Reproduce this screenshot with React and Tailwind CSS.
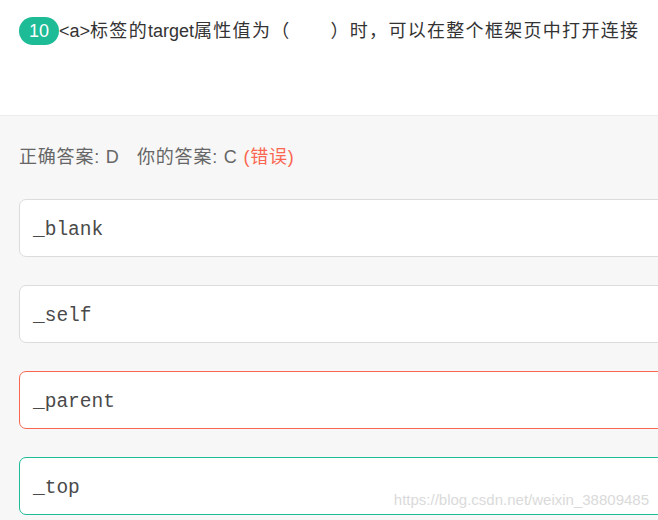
import React from 'react';

const OPTIONS = [
  { key: 'A', text: '_blank', state: 'normal' },
  { key: 'B', text: '_self', state: 'normal' },
  { key: 'C', text: '_parent', state: 'wrong' },
  { key: 'D', text: '_top', state: 'right' },
];

const BORDER = {
  normal: 'border-[#dcdcdc]',
  wrong: 'border-[#fa6650]',
  right: 'border-[#1dbb96]',
};

// CJK runs get a bit of tracking to match the wider glyphs in the original
const Cjk = ({ children }) => <span className="tracking-[1.3px]">{children}</span>;

export default function App() {
  return (
    <div
      className="relative w-[658px] h-[520px] overflow-hidden bg-[#f7f7f7]"
      style={{ fontFamily: '"Liberation Sans", "Noto Sans CJK SC", sans-serif' }}
    >
      {/* question header */}
      <div className="h-[116px] bg-white border-b border-[#ececec] pl-[19px] pt-[17px]">
        <div className="flex items-center text-[18px] text-[#333] leading-[28px]">
          <span className="inline-flex items-center justify-center w-[40px] h-[28px] rounded-full bg-[#1dbb96] text-white text-[18px]">
            10
          </span>
          <span className="whitespace-nowrap">
            &lt;a&gt;<Cjk>标签的</Cjk>target<Cjk>属性值为（</Cjk>
            <span className="inline-block w-[40px]" />
            <Cjk>）时，可以在整个框架页中打开连接</Cjk>
          </span>
        </div>
      </div>

      {/* answer area */}
      <div className="pl-[19px] pt-[29px]">
        <div className="text-[18px] leading-[24px] text-[#666] whitespace-nowrap tracking-[0.8px]">
          正确答案: D&nbsp;&nbsp;&nbsp;你的答案: C <span className="text-[#fa6650]">(错误)</span>
        </div>

        <div className="mt-[30px] flex flex-col gap-[28px]">
          {OPTIONS.map((opt) => (
            <div
              key={opt.key}
              className={`w-[700px] h-[58px] bg-white border rounded-[7px] flex items-center pl-[13px] pt-[5px] ${BORDER[opt.state]}`}
            >
              <span
                className="text-[19.5px] text-[#4a4a4a]"
                style={{ fontFamily: '"Liberation Mono", monospace' }}
              >
                {opt.text}
              </span>
            </div>
          ))}
        </div>
      </div>

      {/* watermark */}
      <div className="absolute right-[9px] bottom-[9px] text-[15px] text-[#dadada] whitespace-nowrap">
        https://blog.csdn.net/weixin_38809485
      </div>
    </div>
  );
}
